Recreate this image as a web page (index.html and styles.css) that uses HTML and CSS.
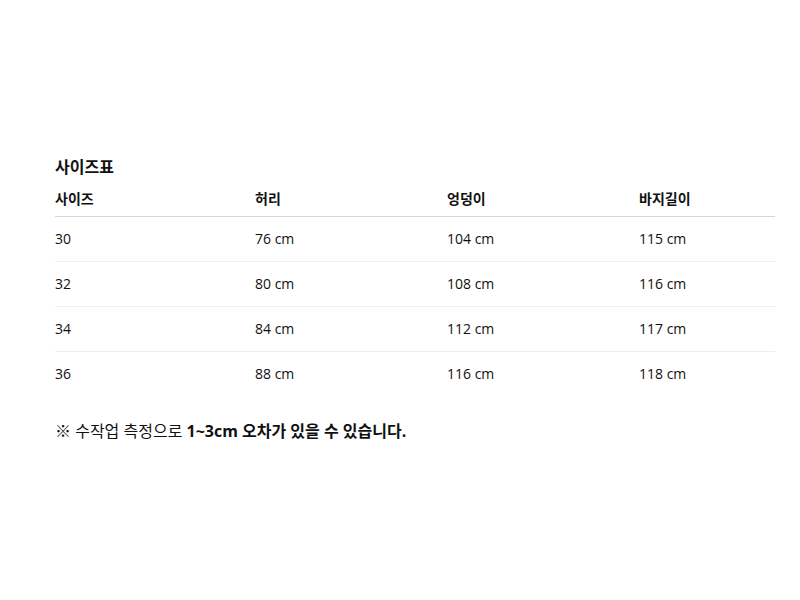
FILE: index.html
```html
<!DOCTYPE html>
<html lang="ko">
<head>
<meta charset="utf-8">
<link rel="stylesheet" href="styles.css">
</head>
<body>
<section class="size-guide">
  <h2 class="title">사이즈표</h2>
  <table class="size-table">
    <thead>
      <tr><th class="c1">사이즈</th><th class="c2">허리</th><th class="c3">엉덩이</th><th class="c4">바지길이</th></tr>
    </thead>
    <tbody>
      <tr><td>30</td><td>76 cm</td><td>104 cm</td><td>115 cm</td></tr>
      <tr><td>32</td><td>80 cm</td><td>108 cm</td><td>116 cm</td></tr>
      <tr><td>34</td><td>84 cm</td><td>112 cm</td><td>117 cm</td></tr>
      <tr><td>36</td><td>88 cm</td><td>116 cm</td><td>118 cm</td></tr>
    </tbody>
  </table>
  <p class="note">※ 수작업 측정으로 <strong>1~3cm 오차가 있을 수 있습니다.</strong></p>
</section>
</body>
</html>
```
FILE: styles.css
```css
html, body {
  margin: 0;
  padding: 0;
  background: #fff;
}
body {
  font-family: "Open Sans", "Noto Sans CJK KR", sans-serif;
  color: #111;
}
.size-guide {
  width: 720px;
  margin: 0 0 0 55px;
  padding-top: 156px;
}
.title {
  margin: 0;
  font-size: 16px;
  font-weight: 700;
  line-height: 22px;
}
.size-table {
  width: 100%;
  border-collapse: collapse;
  margin-top: 11px;
  font-size: 14px;
}
.size-table th {
  text-align: left;
  font-weight: 700;
  line-height: 20px;
  height: 20px;
  padding: 0 0 7px 0;
  border-bottom: 1px solid #d6d6d6;
}
.size-table td {
  line-height: 20px;
  height: 20px;
  padding: 12px 0;
  border-bottom: 1px solid #eeeeee;
}
.size-table tbody tr:last-child td {
  border-bottom: none;
}
.c1 { width: 200px; }
.c2 { width: 192px; }
.c3 { width: 192px; }
.note {
  margin: 24px 0 0 0;
  font-size: 16px;
  line-height: 22px;
}
.note strong {
  font-weight: 700;
}
```
